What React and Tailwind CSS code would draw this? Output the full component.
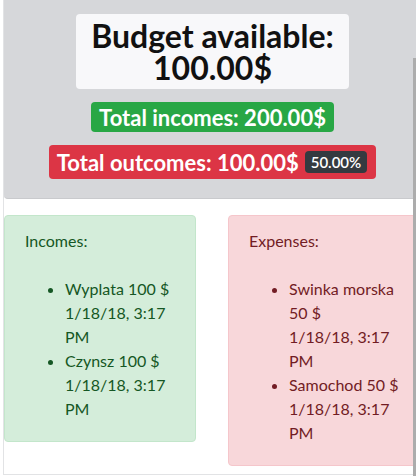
import React from "react";

const incomes = [
  { name: "Wyplata", amount: 100, date: "1/18/18, 3:17 PM" },
  { name: "Czynsz", amount: 100, date: "1/18/18, 3:17 PM" },
];

const expenses = [
  { name: "Swinka morska", amount: 50, date: "1/18/18, 3:17 PM" },
  { name: "Samochod", amount: 50, date: "1/18/18, 3:17 PM" },
];

const ListCard = ({ title, items, tone }) => {
  const box =
    tone === "green"
      ? "bg-[#d4edda] border-[#c3e6cb] text-[#155724]"
      : "bg-[#f8d7da] border-[#f5c6cb] text-[#721c24]";
  return (
    <div className={`w-[192px] shrink-0 rounded border px-5 pt-[13px] pb-5 ${box}`}>
      <p className="leading-[24px]">{title}</p>
      <ul className="mt-[24px] pl-[40px] list-disc">
        {items.map((it, i) => (
          <li key={i} className="leading-[24px]">
            {it.name} {it.amount} $
            <span className="block">{it.date}</span>
          </li>
        ))}
      </ul>
    </div>
  );
};

export default function App() {
  return (
    <div className="relative w-[416px] h-[476px] overflow-hidden bg-white font-['Lato',sans-serif] text-[16px]">
      <div className="ml-[3px] w-[418px] h-[475px] border-l border-b border-[#e2e3e5]">
        {/* jumbotron */}
        <div className="h-[199px] bg-[#d6d7da] rounded-bl border-b border-[#c9cacd] flex flex-col items-center pt-[14px]">
          <div className="w-[273px] h-[75px] rounded bg-[#f8f8fa] flex flex-col justify-center text-center text-[#111] font-bold text-[32px] leading-[32px]">
            <span>Budget available:</span>
            <span>100.00$</span>
          </div>
          <div className="mt-[13px] h-[30px] px-[8px] rounded bg-[#28a745] text-white font-bold text-[22px] flex items-center">
            Total incomes: 200.00$
          </div>
          <div className="mt-[13px] h-[34px] pl-[8px] pr-[9px] rounded bg-[#dc3545] text-white font-bold text-[22px] flex items-center gap-[6px]">
            <span>Total outcomes: 100.00$</span>
            <span className="h-[22px] px-[6px] rounded bg-[#343a40] text-[15px] font-semibold flex items-center">
              50.00%
            </span>
          </div>
        </div>

        <div className="flex items-start gap-[32px] mt-[16px]">
          <ListCard title="Incomes:" items={incomes} tone="green" />
          <ListCard title="Expenses:" items={expenses} tone="red" />
        </div>
      </div>

      {/* window edge on the right */}
      <div className="absolute right-0 top-[58px] bottom-0 w-[3px] bg-[#acacac]" />
    </div>
  );
}
